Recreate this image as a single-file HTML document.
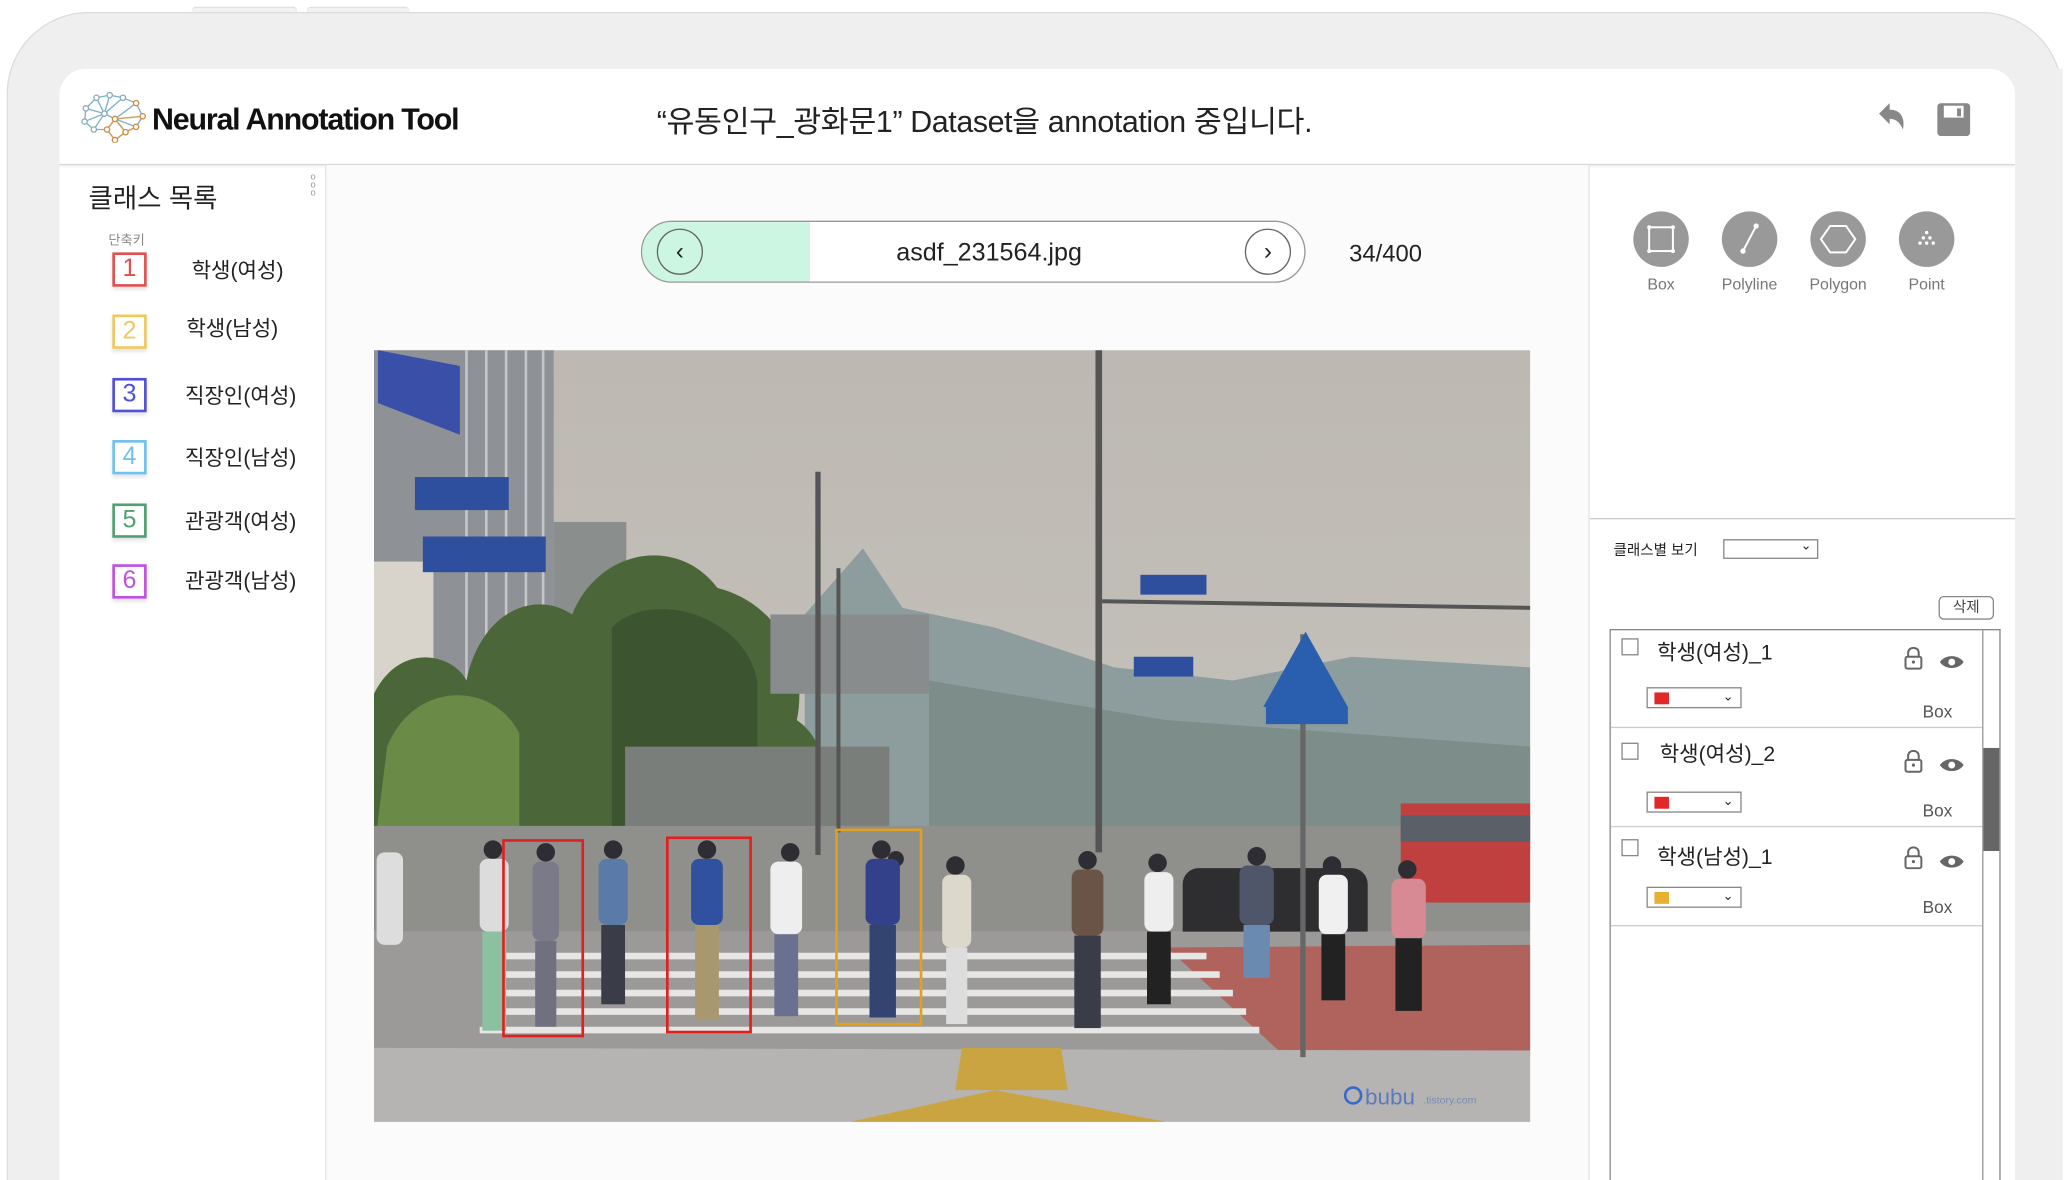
<!DOCTYPE html>
<html><head><meta charset="utf-8">
<style>
html,body{margin:0;padding:0;background:#fff;overflow:hidden;width:2072px;height:1180px}
#w{position:absolute;left:0;top:0;width:1568px;height:893px;overflow:hidden;transform:scale(1.32143);transform-origin:0 0;font-family:"Liberation Sans","Noto Sans CJK KR",sans-serif;color:#222}
.a{position:absolute}
.dev{left:5px;top:9px;width:1556px;height:884px;background:#efefef;border:1px solid #dcdcdc;border-bottom:none;border-radius:62px 62px 0 0;box-sizing:border-box}
.scr{left:45px;top:52px;width:1480px;height:841px;background:#fff;border-radius:20px 20px 0 0;overflow:hidden}
.hdr{left:0;top:0;width:1480px;height:72px;border-bottom:1px solid #d8d8d8;box-shadow:0 1px 2px rgba(0,0,0,.08)}
.kb{width:22px;height:22px;border:2px solid;font-size:19px;line-height:22px;text-align:center;font-weight:300;box-shadow:0 2px 3px rgba(0,0,0,.12)}
.lb{font-size:16px}
.ti{font-size:12px;color:#777;text-align:center;width:60px}
.circ{width:42px;height:42px;border-radius:50%;background:#999}
.it{font-size:16px}
.cb{width:11px;height:11px;border:1px solid #888}
.sel{width:70px;height:14px;border:1px solid #888;background:#fff}
.sw{width:11px;height:9px;left:5px;top:3px}
.chev{right:5px;top:1px;font-size:10px}
</style></head><body><div id="w">
<div class="a" style="left:145px;top:5px;width:80px;height:6px;border-top:1px solid #ddd;border-radius:4px;background:#f2f2f2"></div>
<div class="a" style="left:232px;top:5px;width:78px;height:6px;border-top:1px solid #ddd;border-radius:4px;background:#f2f2f2"></div>
<div class="a dev"></div>
<div class="a scr">
 <div class="a hdr">
  <svg class="a" style="left:16px;top:16px" width="50" height="40" viewBox="0 0 50 40">
   <g stroke-width="1" fill="none">
    <path d="M4 14 L12 6 L22 4 L32 6 L42 10 L47 20 L42 28 L34 32 L26 38 L20 30 L10 30 L3 24 Z M12 6 L18 18 L22 4 M18 18 L32 6 M18 18 L10 30 M18 18 L26 22 L42 10 M26 22 L34 32 M26 22 L20 30 M26 22 L42 28 M4 14 L18 18 M3 24 L18 18" stroke="#7ab0c8"/>
    <path d="M26 22 L34 32 L26 38 L20 30 Z M42 28 L34 32 M47 20 L26 22" stroke="#d49a50"/>
   </g>
   <g fill="#fff" stroke="#8ab" stroke-width="1"><circle cx="12" cy="6" r="2"/><circle cx="22" cy="4" r="2"/><circle cx="32" cy="6" r="2"/><circle cx="4" cy="14" r="2"/><circle cx="18" cy="18" r="2"/><circle cx="3" cy="24" r="2"/><circle cx="10" cy="30" r="2"/></g>
   <g fill="#fff" stroke="#d08a40" stroke-width="1"><circle cx="42" cy="10" r="2"/><circle cx="47" cy="20" r="2"/><circle cx="42" cy="28" r="2"/><circle cx="34" cy="32" r="2"/><circle cx="26" cy="38" r="2"/><circle cx="20" cy="30" r="2"/><circle cx="26" cy="22" r="2"/></g>
  </svg>
  <div class="a" style="left:70px;top:25px;font-size:23px;font-weight:bold;letter-spacing:-0.9px;color:#111">Neural Annotation Tool</div>
  <div class="a" style="left:452px;top:21px;font-size:23px;color:#222;letter-spacing:-0.3px">“유동인구_광화문1” Dataset을 annotation 중입니다.</div>
  <svg class="a" style="left:1375px;top:24px" width="24" height="30" viewBox="0 0 24 30"><path d="M2 10 L10 2 L10 7 C18 7 22 13 20 22 C18 17 15 14 10 14 L10 18 Z" fill="#888"/></svg>
  <svg class="a" style="left:1421px;top:26px" width="25" height="25" viewBox="0 0 25 25"><rect x="0" y="0" width="25" height="25" rx="3" fill="#888"/><rect x="5" y="2" width="15" height="9" fill="#fff"/><rect x="15" y="4" width="3" height="6" fill="#888"/></svg>
 </div>
 <div class="a" style="left:0;top:73px;width:201px;height:768px;border-right:1px solid #e4e4e4"></div>
 <div class="a" style="left:22px;top:82px;font-size:20px">클래스 목록</div>
 <div class="a" style="left:190px;top:80px;font-size:7px;line-height:6px;color:#999">o<br>o<br>o</div>
 <div class="a" style="left:37px;top:121px;font-size:10px;color:#888">단축키</div>
 <div class="a kb" style="left:40px;top:139px;border-color:#e05050;color:#e05050">1</div><div class="a lb" style="left:100px;top:139px">학생(여성)</div>
 <div class="a kb" style="left:40px;top:186px;border-color:#f0c860;color:#f0c860">2</div><div class="a lb" style="left:96px;top:183px">학생(남성)</div>
 <div class="a kb" style="left:40px;top:234px;border-color:#5050d8;color:#5050d8">3</div><div class="a lb" style="left:95px;top:234px">직장인(여성)</div>
 <div class="a kb" style="left:40px;top:281px;border-color:#70c0f0;color:#70c0f0">4</div><div class="a lb" style="left:95px;top:281px">직장인(남성)</div>
 <div class="a kb" style="left:40px;top:329px;border-color:#50a070;color:#50a070">5</div><div class="a lb" style="left:95px;top:329px">관광객(여성)</div>
 <div class="a kb" style="left:40px;top:375px;border-color:#c050e0;color:#c050e0">6</div><div class="a lb" style="left:95px;top:374px">관광객(남성)</div>
 <div class="a" style="left:202px;top:73px;width:955px;height:768px;background:#fbfbfb"></div>
 <div class="a" style="left:440px;top:115px;width:501px;height:45px;border:1px solid #999;border-radius:24px;background:#fff;overflow:hidden">
  <div class="a" style="left:0;top:0;width:127px;height:45px;background:#cdf6e2"></div>
  <div class="a" style="left:11px;top:5px;width:33px;height:33px;border:1px solid #666;border-radius:50%;text-align:center;line-height:32px;font-size:18px">‹</div>
  <div class="a" style="left:456px;top:5px;width:33px;height:33px;border:1px solid #666;border-radius:50%;text-align:center;line-height:32px;font-size:18px;background:#fff">›</div>
  <div class="a" style="left:140px;top:13px;width:245px;text-align:center;font-size:19px">asdf_231564.jpg</div>
 </div>
 <div class="a" style="left:976px;top:130px;font-size:18px">34/400</div>
 <svg class="a" style="left:238px;top:213px" width="875" height="584" viewBox="0 0 875 584">
  <defs><linearGradient id="sk" x1="0" y1="0" x2="0" y2="1"><stop offset="0" stop-color="#bdb8b2"/><stop offset="1" stop-color="#c9c6c0"/></linearGradient></defs>
  <rect width="875" height="584" fill="url(#sk)"/>
  <path d="M326 200 L370 150 L400 195 L470 210 L560 240 L650 250 L740 232 L875 240 L875 380 L326 380Z" fill="#8d9c9c"/>
  <path d="M420 250 L600 280 L875 300 L875 380 L420 380Z" fill="#7c8d8a"/>
  <rect x="0" y="0" width="136" height="380" fill="#8e9296"/>
  <g stroke="#c4c6c8" stroke-width="2"><line x1="70" y1="0" x2="70" y2="300"/><line x1="85" y1="0" x2="85" y2="300"/><line x1="100" y1="0" x2="100" y2="300"/><line x1="115" y1="0" x2="115" y2="300"/><line x1="128" y1="0" x2="128" y2="300"/></g>
  <rect x="0" y="160" width="45" height="200" fill="#d8d4cc"/>
  <rect x="136" y="130" width="55" height="120" fill="#8a8e8c"/>
  <rect x="0" y="300" width="40" height="50" fill="#a33"/>
  <path d="M0 260 C20 220 60 230 70 250 C80 200 120 180 150 200 C170 150 230 140 260 180 C300 190 330 230 320 280 C350 300 350 360 320 380 L0 380Z" fill="#4b6638"/>
  <path d="M10 300 C30 250 90 250 110 290 L110 380 L0 380Z" fill="#6a8a48"/>
  <path d="M180 210 C210 180 280 200 290 250 L290 370 L180 370Z" fill="#3c5530"/>
  <rect x="190" y="300" width="200" height="70" fill="#7a7e7a"/>
  <rect x="300" y="200" width="120" height="60" fill="#888c8c"/>
  <rect x="0" y="360" width="875" height="80" fill="#8f8f8c"/>
  <rect x="777" y="343" width="98" height="75" fill="#c04040"/>
  <rect x="777" y="352" width="98" height="20" fill="#5a6068"/>
  <rect x="612" y="392" width="140" height="60" rx="12" fill="#2e2e30"/>
  <rect x="0" y="440" width="875" height="90" fill="#9c9a98"/>
  <path d="M600 452 L875 450 L875 535 L690 535Z" fill="#b0625c"/>
  <g fill="#e6e6e4">
   <rect x="100" y="456" width="530" height="5"/><rect x="95" y="470" width="545" height="5"/><rect x="90" y="484" width="560" height="5"/><rect x="85" y="498" width="575" height="5"/><rect x="80" y="512" width="590" height="5"/>
  </g>
  <path d="M0 528 L875 530 L875 584 L0 584Z" fill="#b6b4b2"/>
  <path d="M445 528 L520 528 L525 560 L440 560Z" fill="#c9a440"/>
  <path d="M360 584 L470 560 L600 584Z" fill="#c9a440"/>
  <rect x="546" y="0" width="5" height="380" fill="#555"/>
  <rect x="701" y="215" width="4" height="320" fill="#666"/>
  <rect x="334" y="92" width="4" height="290" fill="#555"/>
  <rect x="350" y="165" width="3" height="200" fill="#555"/>
  <line x1="551" y1="190" x2="875" y2="195" stroke="#555" stroke-width="3"/>
  <path d="M705 213 L737 270 L673 270Z" fill="#2a5fb0"/><rect x="675" y="270" width="62" height="13" fill="#2a5fb0"/>
  <path d="M3 0 L65 12 L65 64 L3 40Z" fill="#3a4fa8"/>
  <rect x="31" y="96" width="71" height="25" fill="#2d4f9e"/>
  <rect x="37" y="141" width="93" height="27" fill="#2d4f9e"/>
  <rect x="580" y="170" width="50" height="15" fill="#2d4f9e"/><rect x="575" y="232" width="45" height="15" fill="#2d4f9e"/>
  <g fill="#2d2d33">
   <circle cx="90" cy="378" r="7"/><circle cx="130" cy="380" r="7"/><circle cx="181" cy="378" r="7"/><circle cx="252" cy="378" r="7"/><circle cx="315" cy="380" r="7"/><circle cx="384" cy="378" r="7"/><circle cx="440" cy="390" r="7"/><circle cx="540" cy="386" r="7"/><circle cx="593" cy="388" r="7"/><circle cx="668" cy="383" r="7"/><circle cx="725" cy="390" r="7"/><circle cx="782" cy="393" r="7"/><circle cx="395" cy="385" r="6"/>
  </g>
  <g>
   <rect x="80" y="385" width="22" height="55" rx="6" fill="#dcdcdc"/><rect x="120" y="387" width="20" height="60" rx="6" fill="#7a7a88"/><rect x="170" y="385" width="22" height="50" rx="6" fill="#5a7aa8"/><rect x="240" y="385" width="24" height="50" rx="6" fill="#3050a0"/><rect x="300" y="387" width="24" height="55" rx="6" fill="#eee"/><rect x="372" y="385" width="26" height="50" rx="6" fill="#33408a"/><rect x="430" y="397" width="22" height="55" rx="6" fill="#ddd8cc"/><rect x="528" y="393" width="24" height="50" rx="6" fill="#6a5448"/><rect x="583" y="395" width="22" height="45" rx="6" fill="#eee"/><rect x="655" y="390" width="26" height="45" rx="6" fill="#50566a"/><rect x="715" y="397" width="22" height="45" rx="6" fill="#f0f0f0"/><rect x="770" y="400" width="26" height="45" rx="6" fill="#d88a94"/>
  </g>
  <g fill="#3a3c48">
   <rect x="82" y="440" width="18" height="75" fill="#8bc0a0"/><rect x="122" y="447" width="16" height="65" fill="#707080"/><rect x="172" y="435" width="18" height="60"/><rect x="243" y="435" width="18" height="72" fill="#a89870"/><rect x="303" y="442" width="18" height="62" fill="#6a7090"/><rect x="375" y="435" width="20" height="70" fill="#344470"/><rect x="433" y="452" width="16" height="58" fill="#ddd"/><rect x="530" y="443" width="20" height="70"/><rect x="585" y="440" width="18" height="55" fill="#222"/><rect x="658" y="435" width="20" height="40" fill="#6a8ab0"/><rect x="717" y="442" width="18" height="50" fill="#222"/><rect x="773" y="445" width="20" height="55" fill="#222"/>
  </g>
  <rect x="2" y="380" width="20" height="70" rx="6" fill="#ddd"/>
  <rect x="98" y="371" width="60" height="148" fill="none" stroke="#e02020" stroke-width="2"/>
  <rect x="222" y="369" width="63" height="147" fill="none" stroke="#e02020" stroke-width="2"/>
  <rect x="350" y="363" width="64" height="147" fill="none" stroke="#e0a020" stroke-width="2"/>
  <circle cx="741" cy="564" r="6" fill="none" stroke="#3a6ac8" stroke-width="2"/>
  <text x="750" y="571" font-size="17" fill="#5a7ac0" font-family="Liberation Sans">bubu</text>
  <text x="794" y="570" font-size="8" fill="#7a8ab0" font-family="Liberation Sans">.tistory.com</text>
 </svg>
 <div class="a" style="left:1157px;top:73px;width:1px;height:768px;background:#e4e4e4"></div>
 <div class="a circ" style="left:1191px;top:108px"><svg width="42" height="42"><rect x="12" y="12" width="18" height="18" fill="none" stroke="#fff" stroke-width="1.5"/><g fill="#fff"><circle cx="12" cy="12" r="1.5"/><circle cx="30" cy="12" r="1.5"/><circle cx="12" cy="30" r="1.5"/><circle cx="30" cy="30" r="1.5"/></g></svg></div>
 <div class="a circ" style="left:1258px;top:108px"><svg width="42" height="42"><line x1="16" y1="30" x2="26" y2="11" stroke="#fff" stroke-width="1.5"/><circle cx="16" cy="30" r="2" fill="#fff"/><circle cx="26" cy="11" r="2" fill="#fff"/></svg></div>
 <div class="a circ" style="left:1325px;top:108px"><svg width="42" height="42"><path d="M15 11 L27 11 L34 21 L27 31 L15 31 L8 21Z" fill="none" stroke="#fff" stroke-width="1.5"/></svg></div>
 <div class="a circ" style="left:1392px;top:108px"><svg width="42" height="42" fill="#fff"><circle cx="21" cy="16" r="1.3"/><circle cx="18.5" cy="20" r="1.3"/><circle cx="23.5" cy="20" r="1.3"/><circle cx="16" cy="24" r="1.3"/><circle cx="21" cy="24" r="1.3"/><circle cx="26" cy="24" r="1.3"/></svg></div>
 <div class="a ti" style="left:1182px;top:156px">Box</div><div class="a ti" style="left:1249px;top:156px">Polyline</div><div class="a ti" style="left:1316px;top:156px">Polygon</div><div class="a ti" style="left:1383px;top:156px">Point</div>
 <div class="a" style="left:1158px;top:340px;width:322px;height:1px;background:#ccc"></div>
 <div class="a" style="left:1176px;top:356px;font-size:11px">클래스별 보기</div>
 <div class="a" style="left:1259px;top:356px;width:70px;height:13px;border:1px solid #888"><span class="a" style="right:4px;top:-1px;font-size:10px">⌄</span></div>
 <div class="a" style="left:1422px;top:399px;width:40px;height:16px;border:1px solid #888;border-radius:4px;font-size:11px;text-align:center;line-height:16px;color:#444">삭제</div>
 <div class="a" style="left:1173px;top:424px;width:294px;height:417px;border:1px solid #888;border-bottom:none"></div>
 <div class="a" style="left:1455px;top:425px;width:1px;height:416px;background:#999"></div>
 <div class="a" style="left:1456px;top:514px;width:12px;height:78px;background:#666"></div>
 <div class="a" style="left:1174px;top:498px;width:281px;height:1px;background:#ccc"></div>
 <div class="a" style="left:1174px;top:573px;width:281px;height:1px;background:#ccc"></div>
 <div class="a" style="left:1174px;top:648px;width:281px;height:1px;background:#ccc"></div>
 <div class="a cb" style="left:1182px;top:431px"></div><div class="a it" style="left:1209px;top:428px">학생(여성)_1</div>
 <div class="a cb" style="left:1182px;top:510px"></div><div class="a it" style="left:1211px;top:505px">학생(여성)_2</div>
 <div class="a cb" style="left:1182px;top:583px"></div><div class="a it" style="left:1209px;top:583px">학생(남성)_1</div>
 <div class="a sel" style="left:1201px;top:468px"><div class="a sw" style="background:#e02828"></div><span class="a chev">⌄</span></div>
 <div class="a sel" style="left:1201px;top:547px"><div class="a sw" style="background:#e02828"></div><span class="a chev">⌄</span></div>
 <div class="a sel" style="left:1201px;top:619px"><div class="a sw" style="background:#e8b030"></div><span class="a chev">⌄</span></div>
 <div class="a" style="left:1410px;top:479px;font-size:13px;color:#555">Box</div>
 <div class="a" style="left:1410px;top:554px;font-size:13px;color:#555">Box</div>
 <div class="a" style="left:1410px;top:627px;font-size:13px;color:#555">Box</div>
 <svg class="a" style="left:1396px;top:437px" width="48" height="220" viewBox="0 0 48 220">
  <defs><g id="lk"><path d="M3 8 L3 5 C3 0 11 0 11 5 L11 8" fill="none" stroke="#666" stroke-width="1.5"/><rect x="1" y="8" width="12" height="9" rx="1.5" fill="none" stroke="#666" stroke-width="1.5"/><circle cx="7" cy="12" r="1.2" fill="#666"/>
  <path d="M27 12 C31 6 41 6 45 12 C41 18 31 18 27 12Z" fill="#666"/><circle cx="36" cy="12" r="2.6" fill="#fff"/></g></defs>
  <use href="#lk" x="0" y="0"/><use href="#lk" x="0" y="78"/><use href="#lk" x="0" y="151"/>
 </svg>
</div>
<div class="a" style="left:1525px;top:52px;width:36px;height:841px;background:#efefef"></div>
</div></body></html>
